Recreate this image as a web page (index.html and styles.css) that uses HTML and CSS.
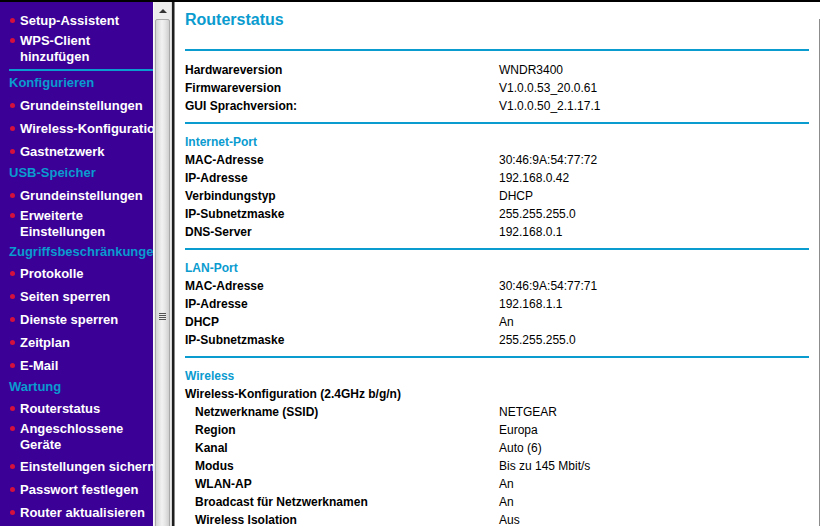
FILE: index.html
```html
<!DOCTYPE html>
<html lang="de">
<head>
<meta charset="utf-8">
<title>Routerstatus</title>
<link rel="stylesheet" href="styles.css">
</head>
<body>
<div class="page">
  <nav class="sidebar">
    <ul class="menu">
      <li class="item"><span>Setup-Assistent</span></li>
      <li class="item two"><span>WPS-Client<br>hinzufügen</span></li>
    </ul>
    <div class="rule"></div>
    <div class="group">Konfigurieren</div>
    <ul class="menu">
      <li class="item"><span>Grundeinstellungen</span></li>
      <li class="item"><span>Wireless-Konfiguration</span></li>
      <li class="item"><span>Gastnetzwerk</span></li>
    </ul>
    <div class="group">USB-Speicher</div>
    <ul class="menu">
      <li class="item"><span>Grundeinstellungen</span></li>
      <li class="item two"><span>Erweiterte<br>Einstellungen</span></li>
    </ul>
    <div class="group tight">Zugriffsbeschränkungen</div>
    <ul class="menu">
      <li class="item"><span>Protokolle</span></li>
      <li class="item"><span>Seiten sperren</span></li>
      <li class="item"><span>Dienste sperren</span></li>
      <li class="item"><span>Zeitplan</span></li>
      <li class="item"><span>E-Mail</span></li>
    </ul>
    <div class="group tight">Wartung</div>
    <ul class="menu">
      <li class="item"><span>Routerstatus</span></li>
      <li class="item two"><span>Angeschlossene<br>Geräte</span></li>
      <li class="item"><span>Einstellungen sichern</span></li>
      <li class="item"><span>Passwort festlegen</span></li>
      <li class="item"><span>Router aktualisieren</span></li>
    </ul>
  </nav>
  <div class="scrollbar">
    <div class="arrow"></div>
    <div class="thumb"><div class="grip"></div></div>
  </div>
  <main class="content">
    <h1 class="title">Routerstatus</h1>
    <div class="sep first"></div>
    <div class="row"><span class="k">Hardwareversion</span><span class="v">WNDR3400</span></div>
    <div class="row"><span class="k">Firmwareversion</span><span class="v">V1.0.0.53_20.0.61</span></div>
    <div class="row"><span class="k">GUI Sprachversion:</span><span class="v">V1.0.0.50_2.1.17.1</span></div>
    <div class="sep"></div>
    <div class="row"><span class="h">Internet-Port</span></div>
    <div class="row"><span class="k">MAC-Adresse</span><span class="v">30:46:9A:54:77:72</span></div>
    <div class="row"><span class="k">IP-Adresse</span><span class="v">192.168.0.42</span></div>
    <div class="row"><span class="k">Verbindungstyp</span><span class="v">DHCP</span></div>
    <div class="row"><span class="k">IP-Subnetzmaske</span><span class="v">255.255.255.0</span></div>
    <div class="row"><span class="k">DNS-Server</span><span class="v">192.168.0.1</span></div>
    <div class="sep"></div>
    <div class="row"><span class="h">LAN-Port</span></div>
    <div class="row"><span class="k">MAC-Adresse</span><span class="v">30:46:9A:54:77:71</span></div>
    <div class="row"><span class="k">IP-Adresse</span><span class="v">192.168.1.1</span></div>
    <div class="row"><span class="k">DHCP</span><span class="v">An</span></div>
    <div class="row"><span class="k">IP-Subnetzmaske</span><span class="v">255.255.255.0</span></div>
    <div class="sep"></div>
    <div class="row"><span class="h">Wireless</span></div>
    <div class="row"><span class="k">Wireless-Konfiguration (2.4GHz b/g/n)</span></div>
    <div class="row sub"><span class="k">Netzwerkname (SSID)</span><span class="v">NETGEAR</span></div>
    <div class="row sub"><span class="k">Region</span><span class="v">Europa</span></div>
    <div class="row sub"><span class="k">Kanal</span><span class="v">Auto (6)</span></div>
    <div class="row sub"><span class="k">Modus</span><span class="v">Bis zu 145 Mbit/s</span></div>
    <div class="row sub"><span class="k">WLAN-AP</span><span class="v">An</span></div>
    <div class="row sub"><span class="k">Broadcast für Netzwerknamen</span><span class="v">An</span></div>
    <div class="row sub"><span class="k">Wireless Isolation</span><span class="v">Aus</span></div>
  </main>
</div>
</body>
</html>
```
FILE: styles.css
```css
html, body {
  margin: 0;
  padding: 0;
  height: 100%;
  overflow: hidden;
  background: #ffffff;
  font-family: "Liberation Sans", Arial, sans-serif;
}

.page {
  display: flex;
  height: 526px;
  box-sizing: border-box;
  border-top: 2px solid #000000;
  overflow: hidden;
}

/* ---------- sidebar ---------- */
.sidebar {
  flex: none;
  width: 153px;
  background: #3b0096;
  padding-top: 8px;
  white-space: nowrap;
  overflow: hidden;
  box-sizing: border-box;
}

.menu {
  list-style: none;
  margin: 0;
  padding: 0;
}

.item {
  display: flex;
  align-items: flex-start;
  padding: 3px 0 4px;
  line-height: 16px;
  font-size: 13px;
  font-weight: bold;
  color: #ffffff;
}

.item.two {
  padding: 0 0 3px;
}

.item::before {
  content: "";
  flex: none;
  width: 5px;
  height: 5px;
  border-radius: 50%;
  background: #d4103c;
  margin: 5px 5px 0 10px;
}

.rule {
  height: 2px;
  margin: 1px 0 3px 9px;
  background: #0a9bcf;
}

.group {
  padding: 0 0 3px 9px;
  line-height: 18px;
  font-size: 13px;
  font-weight: bold;
  color: #0a9bcf;
}

.group.tight {
  padding-bottom: 2px;
}

/* ---------- scrollbar ---------- */
.scrollbar {
  flex: none;
  width: 19px;
  background: #ececec;
  border-left: 1px solid #f8f8f8;
  border-right: 1px solid #d4d4d4;
  box-sizing: border-box;
  display: flex;
  flex-direction: column;
  align-items: center;
  overflow: hidden;
}

.arrow {
  flex: none;
  width: 0;
  height: 0;
  margin-top: 7px;
  margin-bottom: 6px;
  border-left: 4px solid transparent;
  border-right: 4px solid transparent;
  border-bottom: 4px solid #333333;
}

.thumb {
  flex: none;
  width: 15px;
  height: 594px;
  box-sizing: border-box;
  border: 1px solid #a9a9a9;
  border-radius: 2px;
  background: linear-gradient(to right, #d2d2d2, #f2f2f2 45%, #e6e6e6 70%, #cfcfcf);
  display: flex;
  align-items: center;
  justify-content: center;
}

.grip {
  width: 7px;
  height: 7px;
  background: repeating-linear-gradient(to bottom, #555555 0, #555555 1px, transparent 1px, transparent 2px);
}

/* ---------- content ---------- */
.content {
  position: relative;
  flex: 1;
  min-width: 0;
  border-left: 2px solid #1e1e1e;
  box-shadow: inset 1px 0 0 #8a8a8a;
  padding: 0 11px 0 11px;
  font-size: 12px;
  color: #000000;
}

.content::after {
  content: "";
  position: absolute;
  right: 0;
  top: 17px;
  bottom: 0;
  width: 1px;
  background: #8c8c8c;
}

.title {
  margin: 8px 0 19px;
  font-size: 16px;
  line-height: 20px;
  font-weight: bold;
  color: #0a9bcf;
}

.sep {
  height: 2px;
  background: #0a9bcf;
  margin: 7px 0 9px;
}

.sep.first {
  margin: 0 0 10px;
}

.row {
  display: grid;
  grid-template-columns: 314px 1fr;
  line-height: 18px;
  white-space: nowrap;
}

.row .k {
  font-weight: bold;
}

.row.sub .k {
  padding-left: 10px;
}

.row .h {
  font-weight: bold;
  color: #0a9bcf;
}
```
